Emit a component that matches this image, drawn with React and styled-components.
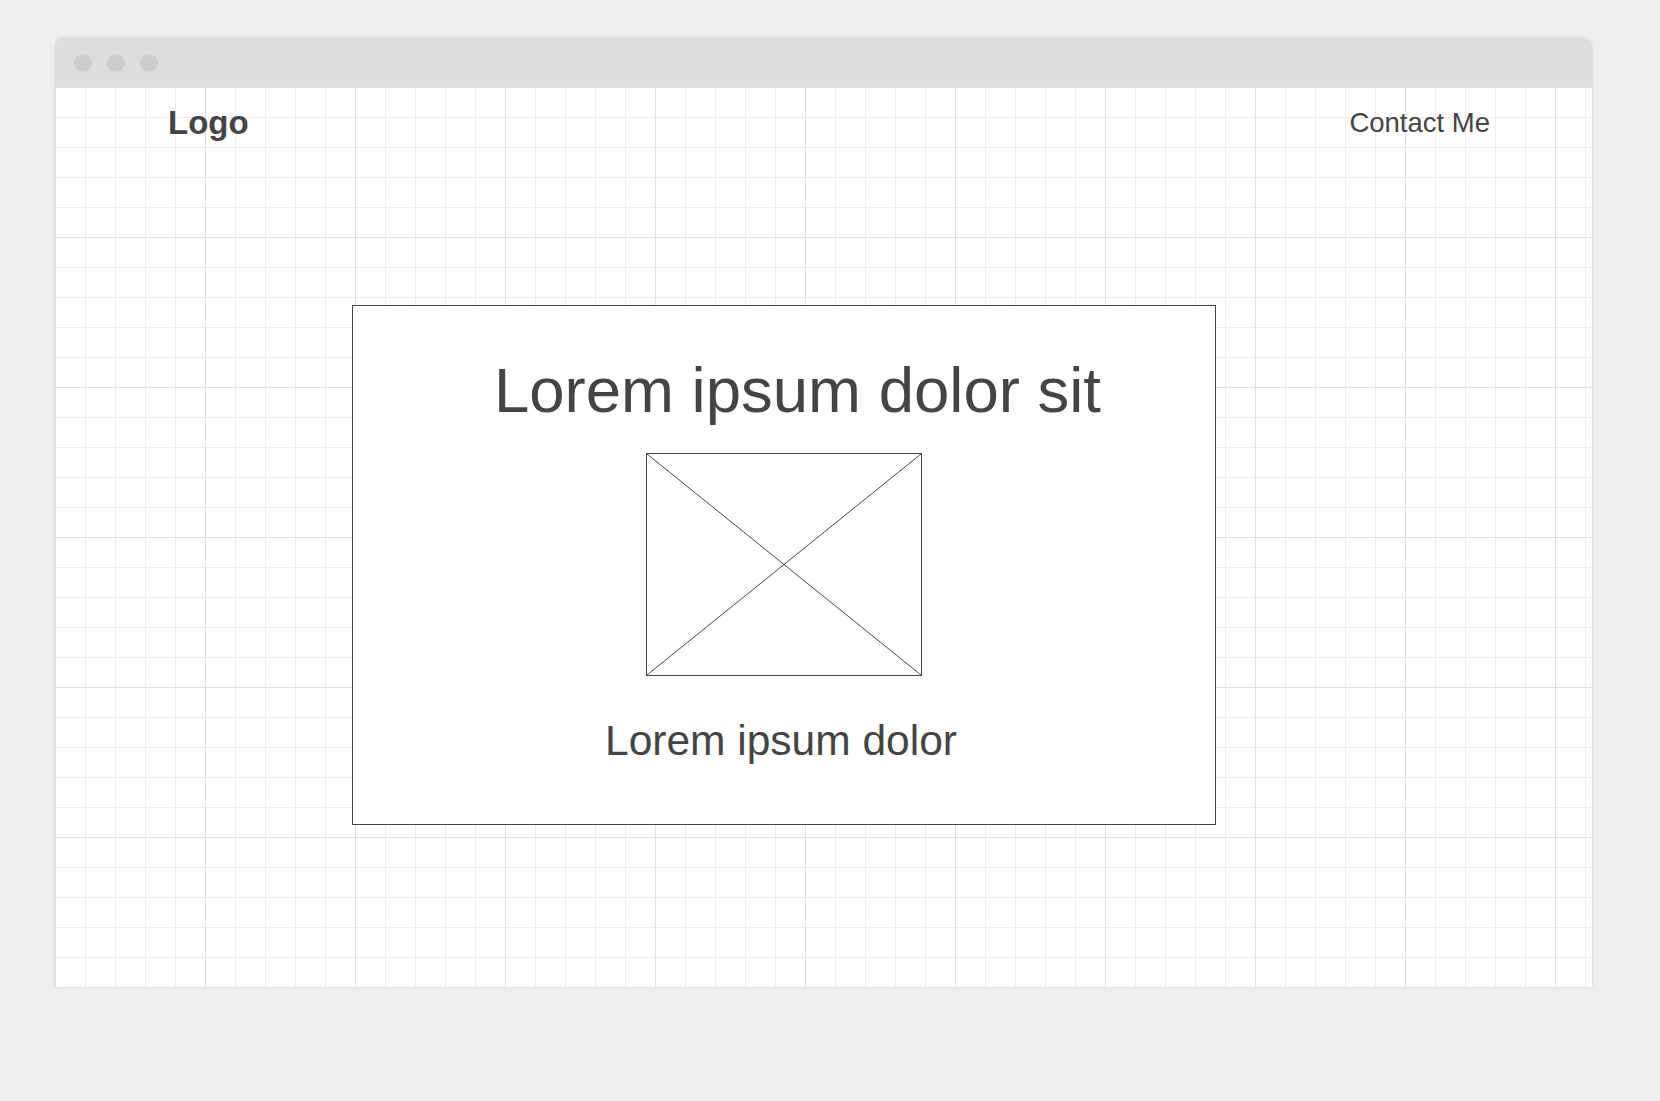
import React from 'react'
import styled, { createGlobalStyle } from 'styled-components'

const GlobalStyle = createGlobalStyle`
  html, body {
    margin: 0;
    padding: 0;
    background: #eeeeee;
  }
  body {
    font-family: 'Liberation Sans', Arial, sans-serif;
    color: #444;
  }
`

const Page = styled.div`
  padding: 38px 0 0 55px;
  min-height: 1101px;
  box-sizing: border-box;
`

const Window = styled.div`
  width: 1537px;
  height: 949px;
  display: flex;
  flex-direction: column;
  border-radius: 8px 8px 0 0;
  box-shadow: 0 0 3px rgba(0, 0, 0, 0.12);
  overflow: hidden;
`

const TitleBar = styled.div`
  height: 49px;
  flex-shrink: 0;
  background: #dddddd;
  display: flex;
  align-items: center;
  gap: 15px;
  padding-left: 19px;
`

const Dot = styled.span`
  width: 18px;
  height: 18px;
  border-radius: 50%;
  background: #cccccc;
`

const Canvas = styled.div`
  flex: 1;
  background-color: #fff;
  background-image:
    linear-gradient(to right, #e1e1e1 1px, transparent 1px),
    linear-gradient(to bottom, #e1e1e1 1px, transparent 1px),
    linear-gradient(to right, #ededed 1px, transparent 1px),
    linear-gradient(to bottom, #ededed 1px, transparent 1px);
  background-size: 150px 150px, 150px 150px, 30px 30px, 30px 30px;
`

const Header = styled.header`
  display: flex;
  justify-content: space-between;
  align-items: center;
  padding: 17px 102px 0 113px;
`

const Logo = styled.div`
  font-size: 33px;
  font-weight: bold;
  color: #444;
`

const NavLink = styled.a`
  font-size: 27.5px;
  color: #444;
  text-decoration: none;
`

const Card = styled.section`
  margin: 163px 0 0 297px;
  width: 864px;
  height: 520px;
  box-sizing: border-box;
  border: 1px solid #444;
  background: #fff;
  display: flex;
  flex-direction: column;
  align-items: center;
  padding-top: 48px;
`

const Title = styled.h1`
  margin: 0;
  padding-left: 27px;
  font-size: 63.5px;
  line-height: 72px;
  font-weight: normal;
  color: #444;
  white-space: nowrap;
`

const Placeholder = styled.svg`
  display: block;
  margin-top: 27px;
  width: 276px;
  height: 223px;
`

const Caption = styled.p`
  margin: 41px 0 0;
  padding-right: 6px;
  font-size: 42.5px;
  line-height: 48px;
  color: #444;
`

function ImagePlaceholder() {
  return (
    <Placeholder viewBox='0 0 276 223'>
      <rect x='0.5' y='0.5' width='275' height='222' fill='#fff' stroke='#444' />
      <line x1='1' y1='1' x2='275' y2='222' stroke='#444' strokeWidth='1' />
      <line x1='275' y1='1' x2='1' y2='222' stroke='#444' strokeWidth='1' />
    </Placeholder>
  )
}

export default function App() {
  return (
    <>
      <GlobalStyle />
      <Page>
        <Window>
          <TitleBar>
            <Dot />
            <Dot />
            <Dot />
          </TitleBar>
          <Canvas>
            <Header>
              <Logo>Logo</Logo>
              <NavLink href='#'>Contact Me</NavLink>
            </Header>
            <Card>
              <Title>Lorem ipsum dolor sit</Title>
              <ImagePlaceholder />
              <Caption>Lorem ipsum dolor</Caption>
            </Card>
          </Canvas>
        </Window>
      </Page>
    </>
  )
}
